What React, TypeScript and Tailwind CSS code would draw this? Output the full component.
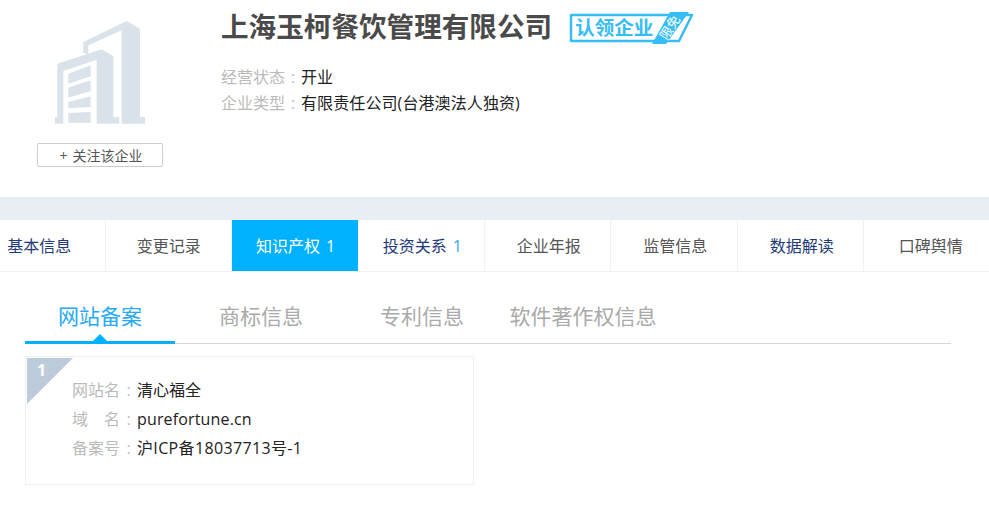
const TABS = [
  { name: "基本信息", color: "text-[#1f3a78] pr-[5px]" },
  { name: "变更记录", color: "text-[#555555] pl-[1px]" },
  { name: "知识产权", count: "1", active: true },
  { name: "投资关系", count: "1", color: "text-[#1f3a78] pl-[3px]" },
  { name: "企业年报", color: "text-[#555555] pl-[3px]" },
  { name: "监管信息", color: "text-[#555555] pl-[3px]" },
  { name: "数据解读", color: "text-[#1f3a78] pl-[3px]" },
  { name: "口碑舆情", color: "text-[#555555] pl-[8px]" },
];

const SUB_TABS = ["网站备案", "商标信息", "专利信息", "软件著作权信息"];

function Building() {
  return (
    <svg width="100" height="110" viewBox="150 50 300 330" fill="#dae2ea">
      <path d="M250 125 380 62 420 85V350H435V370H365V90L265 135V162L250 158Z" />
      <path d="M165 370V350H172V190L305 147 340 168V350H358V370H290V178L190 212V370Z" />
      <path d="M205 220 272 195V228L205 250Z" />
      <path d="M205 262 272 240V272L205 292Z" />
      <path d="M205 305 272 288V320L205 324Z" />
      <path d="M205 338 272 335V367H205Z" />
    </svg>
  );
}

function ClaimBadge() {
  return (
    <div className="relative ml-[17px] mt-px h-[34px] w-[125px] shrink-0">
      <svg width="125" height="34" viewBox="0 0 125 34" className="absolute left-0 top-0">
        <path d="M2 4H123L110 30H2Z" fill="white" stroke="#36bdf5" strokeWidth="2.5" strokeLinejoin="round" />
        <path d="M101 1H120L97 33H83Z" fill="#36bdf5" />
      </svg>
      <span className="absolute left-[6px] top-[3px] whitespace-nowrap text-[19.5px] font-bold leading-[27px] text-[#36bdf5]">认领企业</span>
      <span className="absolute left-[88px] top-[8px] -rotate-[58deg] whitespace-nowrap text-[13px] leading-[17px] text-white">限免</span>
    </div>
  );
}

function Row({ label, value, spacing }: { label: React.ReactNode; value: string; spacing?: string }) {
  return (
    <div className="flex h-[29px] items-center text-[16px]">
      <span className="w-[48px] shrink-0 text-[#bbbbbb]">{label}</span>
      <span className="w-[17px] shrink-0 text-center text-[#bbbbbb]">:</span>
      <span className={"text-[#222222] " + (spacing ?? "")}>{value}</span>
    </div>
  );
}

export default function App() {
  return (
    <div className="h-[514px] w-[989px] overflow-hidden bg-white font-['Open_Sans','Noto_Sans_CJK_SC',sans-serif]">
      {/* company header */}
      <div className="flex h-[197px]">
        <div className="flex w-[200px] shrink-0 flex-col items-center pt-[17px]">
          <Building />
          <button className="mt-[16px] h-[24px] w-[126px] rounded-[2px] border border-[#cccccc] pl-[2px] pt-[1px] text-[14px] leading-[22px] text-[#555555]">
            <span className="mr-[5px]">+</span>
            关注该企业
          </button>
        </div>
        <div className="pl-[21px]">
          <div className="flex h-[55px] items-center">
            <h1 className="-mt-[3px] whitespace-nowrap text-[27.6px] font-bold leading-[40px] text-[#4a4a4a]">上海玉柯餐饮管理有限公司</h1>
            <ClaimBadge />
          </div>
          <div className="mt-[9px] flex h-[26px] items-center text-[16px]">
            <span className="w-[64px] text-[#bbbbbb]">经营状态</span>
            <span className="w-[16px] text-center text-[#bbbbbb]">:</span>
            <span className="text-[#222222]">开业</span>
          </div>
          <div className="flex h-[26px] items-center text-[16px]">
            <span className="w-[64px] text-[#bbbbbb]">企业类型</span>
            <span className="w-[16px] text-center text-[#bbbbbb]">:</span>
            <span className="tracking-[0.1px] text-[#222222]">有限责任公司(台港澳法人独资)</span>
          </div>
        </div>
      </div>

      <div className="h-[23px] bg-[#e9eef5]" />

      {/* main tabs */}
      <div className="flex h-[52px] border-b border-[#eef1f5]">
        <div className="-ml-[21px] flex">
          {TABS.map((t) => (
            <div
              key={t.name}
              className={
                t.active
                  ? "flex h-[51px] w-[126px] items-center justify-center gap-[6px] bg-[#00b1ff] pl-[1px] pt-[1px] text-[16px] text-white"
                  : "flex h-[51px] w-[126.5px] items-center justify-center gap-[6px] border-r border-[#eef1f5] pt-[1px] text-[16px] " + t.color
              }
            >
              <span>{t.name}</span>
              {t.count && <span className={t.active ? "text-white" : "text-[#38a8e8]"}>{t.count}</span>}
            </div>
          ))}
        </div>
      </div>

      {/* sub tabs */}
      <div className="ml-[25px] mr-[38px] mt-[19px] flex h-[53px] gap-[11px] border-b border-[#d9d9d9]">
        {SUB_TABS.map((t, i) => (
          <div
            key={t}
            className={
              i === 0
                ? "relative flex h-[53px] w-[150px] items-start justify-center whitespace-nowrap border-b-[3px] border-[#00b1ff] pt-[8px] text-[21px] leading-[34px] text-[#29aaf5]"
                : "flex h-[53px] w-[150px] items-start justify-center whitespace-nowrap pt-[8px] text-[21px] leading-[34px] text-[#aaaaaa]"
            }
          >
            {t}
            {i === 0 && (
              <span className="absolute bottom-0 left-[68px] h-0 w-0 border-x-[7px] border-b-[7px] border-x-transparent border-b-[#00b1ff]" />
            )}
          </div>
        ))}
      </div>

      {/* record card */}
      <div className="relative ml-[25px] mt-[12px] h-[129px] w-[449px] border border-[#eef0f6] pl-[46px] pt-[18px]">
        <div className="absolute left-[1px] top-[1px] h-[46px] w-[46px] bg-[#bdccda] [clip-path:polygon(0_0,100%_0,0_100%)]" />
        <span className="absolute left-[11px] top-[1px] text-[16px] font-bold leading-[24px] text-white">1</span>
        <Row label="网站名" value="清心福全" />
        <Row label={<>域&emsp;名</>} value="purefortune.cn" spacing="tracking-[0.15px]" />
        <Row label="备案号" value="沪ICP备18037713号-1" spacing="tracking-[0.35px]" />
      </div>
    </div>
  );
}
